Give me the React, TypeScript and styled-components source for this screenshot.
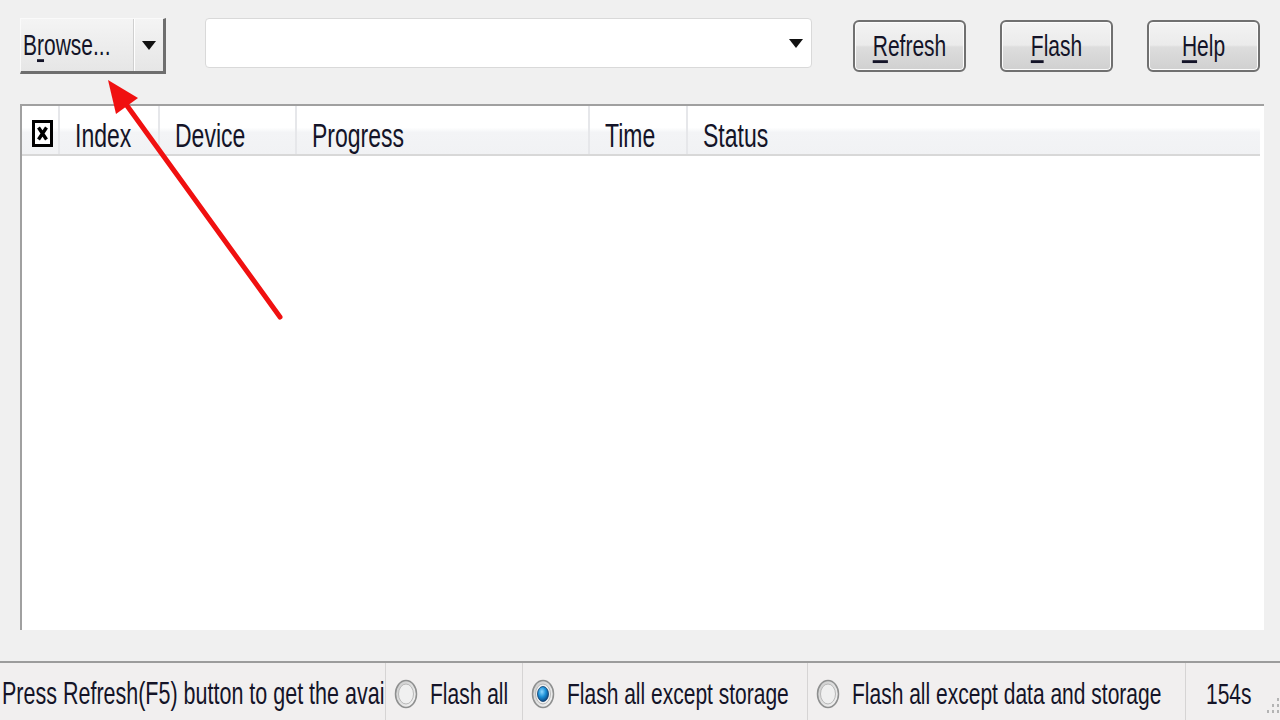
import styled, { createGlobalStyle } from "styled-components";

const GlobalStyle = createGlobalStyle`
 html, body {
  margin: 0;
  padding: 0;
  background: #f0f0f0;
 }
 body {
  font-family: "Liberation Sans", Arial, sans-serif;
 }
`;

const Page = styled.div`
 position: relative;
 width: 1280px;
 height: 720px;
 overflow: hidden;
 display: flex;
 flex-direction: column;
 background: #f0f0f0;
 color: #141428;
`;

// the screenshot was stretched vertically, so text is scaled to match
const Label = styled.span<{ $size?: number }>`
 display: inline-block;
 font-size: ${({ $size }) => $size ?? 21}px;
 line-height: 24px;
 white-space: nowrap;
 transform: scaleY(1.42);
 u {
  text-decoration-thickness: 2px;
  text-underline-offset: 3px;
 }
`;

const Toolbar = styled.div`
 display: flex;
 align-items: flex-start;
 height: 104px;
 flex-shrink: 0;
 padding: 18px 20px 0 20px;
 box-sizing: border-box;
`;

const SplitButton = styled.div`
 display: flex;
 width: 146px;
 height: 56px;
 box-sizing: border-box;
 border-top: 1px solid #fafafa;
 border-left: 1px solid #fafafa;
 border-right: 3px solid #6e6e6e;
 border-bottom: 3px solid #6e6e6e;
 background: linear-gradient(#f4f4f4, #e6e6e6);
`;

const SplitMain = styled.div`
 width: 113px;
 display: flex;
 align-items: center;
 padding-left: 2px;
 box-sizing: border-box;
 border-right: 1px solid #cfcfcf;
`;

const SplitArrow = styled.div`
 flex: 1;
 display: flex;
 align-items: center;
 justify-content: center;
 border-left: 1px solid #ffffff;
`;

const Combo = styled.div`
 margin-left: 39px;
 width: 607px;
 height: 50px;
 box-sizing: border-box;
 border: 1px solid #d9d9d9;
 border-radius: 4px;
 background: #fff;
 display: flex;
 align-items: center;
 justify-content: flex-end;
 padding-right: 8px;
`;

const ButtonGroup = styled.div`
 display: flex;
 gap: 34px;
 margin-left: 41px;
 margin-top: 2px;
`;

const PushButton = styled.div`
 width: 113px;
 height: 52px;
 box-sizing: border-box;
 border: 2px solid #707070;
 border-radius: 6px;
 background: linear-gradient(#f3f3f3 0%, #ebebeb 48%, #dddddd 52%, #d0d0d0 100%);
 box-shadow: inset 0 0 0 1px #fcfcfc;
 display: flex;
 align-items: center;
 justify-content: center;
`;

const TablePanel = styled.div`
 margin: 0 16px 0 20px;
 height: 526px;
 flex-shrink: 0;
 box-sizing: border-box;
 border-top: 2px solid #a0a0a0;
 border-left: 2px solid #a0a0a0;
 background: #fff;
 display: flex;
 flex-direction: column;
`;

const HeaderRow = styled.div`
 display: flex;
 height: 50px;
 margin-right: 4px;
 box-sizing: border-box;
 border-bottom: 2px solid #d8d8d8;
 background: linear-gradient(#ffffff 0%, #ffffff 45%, #f3f4f6 55%, #f1f2f4 100%);
`;

const HeaderCell = styled.div<{ $w?: number }>`
 ${({ $w }) => ($w ? `width: ${$w}px;` : "flex: 1;")}
 display: flex;
 align-items: center;
 padding: 12px 0 0 15px;
 box-sizing: border-box;
 border-right: 2px solid #e6e7ea;
 &:last-child {
  border-right: none;
 }
`;

const CheckCell = styled(HeaderCell)`
 padding: 6px 0 0 10px;
`;

const Body = styled.div`
 flex: 1;
 background: #fff;
`;

const StatusBar = styled.div`
 margin-top: 31px;
 flex: 1;
 display: flex;
 align-items: stretch;
 border-top: 2px solid #9c9c9c;
 background: #f1efef;
`;

const StatusSection = styled.div<{ $w?: number; $pad?: number }>`
 ${({ $w }) => ($w ? `width: ${$w}px;` : "flex: 1;")}
 display: flex;
 align-items: center;
 gap: 12px;
 padding-left: ${({ $pad }) => $pad ?? 8}px;
 padding-top: 4px;
 box-sizing: border-box;
 border-right: 1px solid #d6d4d4;
 overflow: hidden;
 &:last-child {
  border-right: none;
 }
`;

const Grip = styled.div`
 align-self: flex-end;
 margin-left: auto;
 margin-right: 2px;
 margin-bottom: 2px;
`;

const Overlay = styled.svg`
 position: absolute;
 left: 0;
 top: 0;
 pointer-events: none;
`;

const DropArrow = () => (
 <svg width="14" height="9" viewBox="0 0 14 9">
  <polygon points="0,0 14,0 7,9" fill="#111" />
 </svg>
);

const HeaderCheck = () => (
 <svg width="21" height="27" viewBox="0 0 21 27">
  <rect x="1.5" y="1.5" width="18" height="24" fill="#fff" stroke="#000" strokeWidth="3" />
  <path d="M6.5 7.5 L14.5 19.5 M14.5 7.5 L6.5 19.5" stroke="#000" strokeWidth="3.4" />
 </svg>
);

const Radio = ({ checked }: { checked?: boolean }) => (
 <svg width="24" height="30" viewBox="0 0 24 30">
  <defs>
   <linearGradient id="rbg" x1="0" y1="0" x2="1" y2="1">
    <stop offset="0" stopColor="#c9c9c9" />
    <stop offset="1" stopColor="#f8f8f8" />
   </linearGradient>
   <radialGradient id="rdot" cx="0.4" cy="0.35" r="0.7">
    <stop offset="0" stopColor="#8fd8ff" />
    <stop offset="0.5" stopColor="#1a8fd6" />
    <stop offset="1" stopColor="#0a3f7a" />
   </radialGradient>
  </defs>
  <ellipse cx="12" cy="15" rx="10.5" ry="13.5" fill="url(#rbg)" stroke="#8e8f8f" strokeWidth="1.5" />
  <ellipse cx="12" cy="15" rx="7.5" ry="10" fill="#f0f0f0" stroke="#b8b8b8" strokeWidth="1" />
  {checked && <ellipse cx="12" cy="15" rx="5.5" ry="7.5" fill="url(#rdot)" stroke="#0d3a6a" strokeWidth="0.8" />}
 </svg>
);

const GripDots = () => (
 <svg width="16" height="20" viewBox="0 0 16 20">
  {[
   [13, 4], [13, 10], [13, 16], [8, 10], [8, 16], [3, 16],
  ].map(([x, y], i) => (
   <rect key={i} x={x} y={y} width="2" height="3" fill="#b4b4b4" />
  ))}
 </svg>
);

const columns = [
 { name: "Index", w: 100 },
 { name: "Device", w: 137 },
 { name: "Progress", w: 293 },
 { name: "Time", w: 98 },
 { name: "Status" },
];

const options = [
 { label: "Flash all", w: 137, checked: false },
 { label: "Flash all except storage", w: 285, checked: true },
 { label: "Flash all except data and storage", w: 378, checked: false },
];

export default function App() {
 return (
  <Page>
   <GlobalStyle />
   <Toolbar>
    <SplitButton>
     <SplitMain>
      <Label>
       B<u>r</u>owse...
      </Label>
     </SplitMain>
     <SplitArrow>
      <DropArrow />
     </SplitArrow>
    </SplitButton>
    <Combo>
     <DropArrow />
    </Combo>
    <ButtonGroup>
     <PushButton>
      <Label>
       <u>R</u>efresh
      </Label>
     </PushButton>
     <PushButton>
      <Label>
       <u>F</u>lash
      </Label>
     </PushButton>
     <PushButton>
      <Label>
       <u>H</u>elp
      </Label>
     </PushButton>
    </ButtonGroup>
   </Toolbar>

   <TablePanel>
    <HeaderRow>
     <CheckCell $w={38}>
      <HeaderCheck />
     </CheckCell>
     {columns.map((c) => (
      <HeaderCell key={c.name} $w={c.w}>
       <Label $size={23}>{c.name}</Label>
      </HeaderCell>
     ))}
    </HeaderRow>
    <Body />
   </TablePanel>

   <StatusBar>
    <StatusSection $w={386} $pad={2}>
     <Label $size={21.5}>Press Refresh(F5) button to get the avai</Label>
    </StatusSection>
    {options.map((o) => (
     <StatusSection key={o.label} $w={o.w}>
      <Radio checked={o.checked} />
      <Label>{o.label}</Label>
     </StatusSection>
    ))}
    <StatusSection $pad={20}>
     <Label>154s</Label>
     <Grip>
      <GripDots />
     </Grip>
    </StatusSection>
   </StatusBar>

   <Overlay width="1280" height="720" viewBox="0 0 1280 720">
    <line x1="280" y1="317" x2="120" y2="96" stroke="#f01010" strokeWidth="5" strokeLinecap="round" />
    <polygon points="108,80 138,98 116,114" fill="#f01010" />
   </Overlay>
  </Page>
 );
}
